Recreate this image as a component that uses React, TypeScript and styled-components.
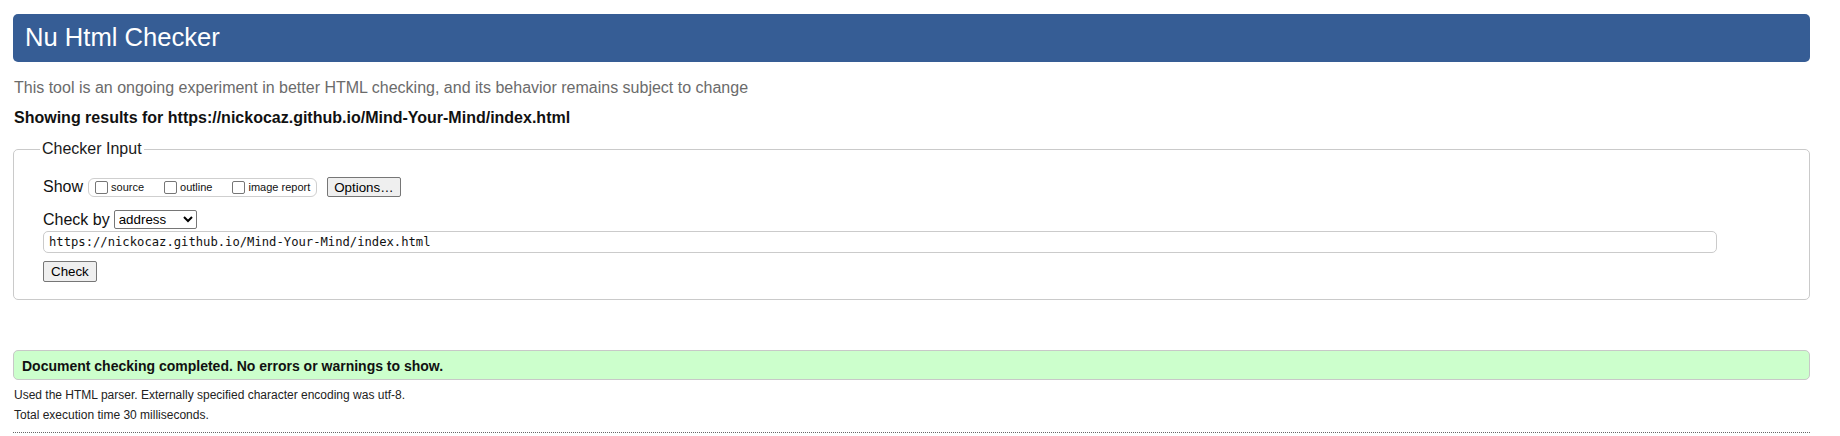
import React from 'react';
import styled, { createGlobalStyle } from 'styled-components';

const GlobalStyle = createGlobalStyle`
  body {
    margin: 0;
    padding: 0 30px 0 13px;
    background: #fff;
    color: #000;
    font-family: "Liberation Sans", Arial, sans-serif;
  }
`;

const Page = styled.div`
  display: flex;
  flex-direction: column;
`;

const Header = styled.h1`
  margin: 14px 0 0;
  height: 48px;
  padding: 0 12px;
  box-sizing: border-box;
  background: #365d95;
  color: #fff;
  border-radius: 5px;
  font-size: 25.6px;
  font-weight: normal;
  line-height: 47px;
`;

const Text = styled.p<{ $top: number; $bold?: boolean; $muted?: boolean }>`
  margin: ${p => p.$top}px 0 0 1px;
  font-size: 16px;
  line-height: 20px;
  font-weight: ${p => (p.$bold ? 'bold' : 'normal')};
  color: ${p => (p.$muted ? '#6b6b6b' : '#111')};
`;

const Fieldset = styled.fieldset`
  margin: 11px 0 0;
  padding: 18px 30px 17px 29px;
  border: 1px solid #cacaca;
  border-radius: 5px;
  min-width: 0;
`;

const Legend = styled.legend`
  margin-left: -3px;
  padding: 0 2px;
  font-size: 16px;
  line-height: 20px;
  color: #1a1a1a;
`;

const Fields = styled.div`
  display: flex;
  flex-direction: column;
  align-items: flex-start;
`;

const Row = styled.div<{ $top: number; $height: number }>`
  display: flex;
  align-items: center;
  height: ${p => p.$height}px;
  margin-top: ${p => p.$top}px;
`;

const RowLabel = styled.span<{ $lh: number }>`
  font-size: 16px;
  line-height: ${p => p.$lh}px;
  color: #111;
`;

const ShowGroup = styled.span`
  display: inline-flex;
  align-items: center;
  gap: 20px;
  height: 19px;
  box-sizing: border-box;
  margin-left: 5px;
  padding: 0 6px;
  border: 1px solid #cfcfcf;
  border-radius: 6px;
`;

const ShowOption = styled.label`
  display: inline-flex;
  align-items: center;
  gap: 3px;
  font-size: 11px;
  line-height: 13px;
  color: #111;
`;

const Box = styled.input`
  appearance: none;
  width: 13px;
  height: 13px;
  margin: 0;
  box-sizing: border-box;
  border: 1px solid #767676;
  border-radius: 2px;
  background: #fff;
`;

const Button = styled.button<{ $height: number; $left?: number; $pad: number }>`
  height: ${p => p.$height}px;
  margin-left: ${p => p.$left ?? 0}px;
  padding: 0 ${p => p.$pad}px;
  box-sizing: border-box;
  border: 1px solid #767676;
  border-radius: 2px;
  background: #efefef;
  color: #000;
  font-family: "Liberation Sans", Arial, sans-serif;
  font-size: 13.33px;
  line-height: 15px;
`;

const Select = styled.select`
  width: 83px;
  height: 19px;
  margin: 0 0 0 4px;
  font-family: "Liberation Sans", Arial, sans-serif;
  font-size: 13.33px;
  color: #000;
  border: 1px solid #767676;
  border-radius: 2px;
  background: #fff;
`;

const UrlInput = styled.input`
  width: calc(100% - 62px);
  height: 22px;
  margin: 2px 0 0;
  padding: 0 5px;
  box-sizing: border-box;
  border: 1px solid #cbcbcb;
  border-radius: 5px;
  font-family: "DejaVu Sans Mono", "Liberation Mono", monospace;
  font-size: 12.2px;
  color: #111;
  outline: none;
`;

const Success = styled.p`
  margin: 50px 0 0;
  padding: 7px 8px 4px;
  border: 1px solid #c8c8c8;
  border-radius: 5px;
  background: #ccffcc;
  font-size: 14px;
  font-weight: bold;
  line-height: 17px;
  color: #111;
`;

const Detail = styled.p<{ $top: number }>`
  margin: ${p => p.$top}px 0 0 1px;
  font-size: 12px;
  line-height: 20px;
  color: #222;
`;

const Rule = styled.hr`
  margin: 7px 0 0;
  border: none;
  border-top: 1px dotted #666;
`;

const url = 'https://nickocaz.github.io/Mind-Your-Mind/index.html';

export default function App() {
  return (
    <>
      <GlobalStyle />
      <Page>
        <Header>Nu Html Checker</Header>
        <Text $top={16} $muted>
          This tool is an ongoing experiment in better HTML checking, and its behavior remains subject to change
        </Text>
        <Text $top={10} $bold>Showing results for {url}</Text>

        <Fieldset>
          <Legend>Checker Input</Legend>
          <Fields>
            <Row $top={0} $height={20}>
              <RowLabel $lh={20}>Show</RowLabel>
              <ShowGroup>
                <ShowOption><Box type="checkbox" />source</ShowOption>
                <ShowOption><Box type="checkbox" />outline</ShowOption>
                <ShowOption><Box type="checkbox" />image report</ShowOption>
              </ShowGroup>
              <Button type="button" $height={20} $left={10} $pad={6}>Options…</Button>
            </Row>
            <Row $top={13} $height={19}>
              <RowLabel $lh={19}>Check by</RowLabel>
              <Select defaultValue="address">
                <option value="address">address</option>
                <option value="file">file upload</option>
                <option value="text">text input</option>
              </Select>
            </Row>
            <UrlInput type="url" defaultValue={url} />
            <Row $top={8} $height={21}>
              <Button type="submit" $height={21} $pad={7}>Check</Button>
            </Row>
          </Fields>
        </Fieldset>

        <Success>Document checking completed. No errors or warnings to show.</Success>
        <Detail $top={5}>Used the HTML parser. Externally specified character encoding was utf-8.</Detail>
        <Detail $top={0}>Total execution time 30 milliseconds.</Detail>
        <Rule />
      </Page>
    </>
  );
}
